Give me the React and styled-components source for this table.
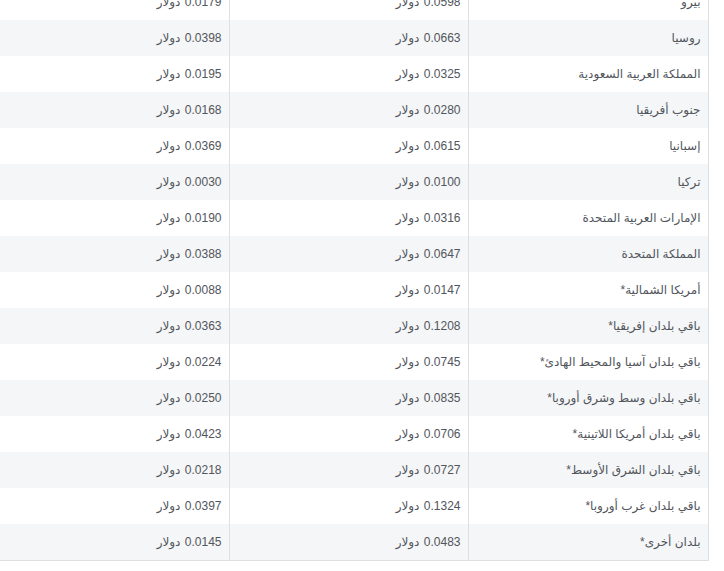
import React from "react";
import styled, { createGlobalStyle } from "styled-components";

const Global = createGlobalStyle`
  html, body { margin: 0; padding: 0; background: #fff; }
  body { font-family: "Liberation Sans", "DejaVu Sans", Arial, sans-serif; }
`;

const Wrap = styled.div`
  width: 708px;
  margin-top: -16px;
`;

const Table = styled.table`
  direction: rtl;
  width: 708px;
  border-collapse: collapse;
  table-layout: fixed;
  border-right: 1px solid #dddfe2;
  border-bottom: 1px solid #dddfe2;
  font-size: 12px;
  color: #51555c;
`;

const Row = styled.tr`
  background: ${(p) => (p.$alt ? "#f5f6f7" : "#ffffff")};
`;

const Cell = styled.td`
  height: 36px;
  padding: 0 7px 0 8px;
  text-align: right;
  vertical-align: middle;
  white-space: nowrap;
  border-left: ${(p) => (p.$last ? "none" : "1px solid #dddfe2")};
  box-sizing: border-box;
  line-height: 16px;
`;

const Currency = styled.span`
  margin-right: 1px;
`;

const rows = [
  ["بيرو", "0.0598", "0.0179"],
  ["روسيا", "0.0663", "0.0398"],
  ["المملكة العربية السعودية", "0.0325", "0.0195"],
  ["جنوب أفريقيا", "0.0280", "0.0168"],
  ["إسبانيا", "0.0615", "0.0369"],
  ["تركيا", "0.0100", "0.0030"],
  ["الإمارات العربية المتحدة", "0.0316", "0.0190"],
  ["المملكة المتحدة", "0.0647", "0.0388"],
  ["أمريكا الشمالية*", "0.0147", "0.0088"],
  ["باقي بلدان إفريقيا*", "0.1208", "0.0363"],
  ["باقي بلدان آسيا والمحيط الهادئ*", "0.0745", "0.0224"],
  ["باقي بلدان وسط وشرق أوروبا*", "0.0835", "0.0250"],
  ["باقي بلدان أمريكا اللاتينية*", "0.0706", "0.0423"],
  ["باقي بلدان الشرق الأوسط*", "0.0727", "0.0218"],
  ["باقي بلدان غرب أوروبا*", "0.1324", "0.0397"],
  ["بلدان أخرى*", "0.0483", "0.0145"],
];

export default function App() {
  return (
    <>
      <Global />
      <Wrap>
        <Table>
          <colgroup>
            <col style={{ width: 240 }} />
            <col style={{ width: 239 }} />
            <col style={{ width: 229 }} />
          </colgroup>
          <tbody>
            {rows.map(([country, a, b], i) => (
              <Row key={i} $alt={i % 2 === 1}>
                <Cell>{country}</Cell>
                <Cell>
                  {a} <Currency>دولار</Currency>
                </Cell>
                <Cell $last>
                  {b} <Currency>دولار</Currency>
                </Cell>
              </Row>
            ))}
          </tbody>
        </Table>
      </Wrap>
    </>
  );
}
